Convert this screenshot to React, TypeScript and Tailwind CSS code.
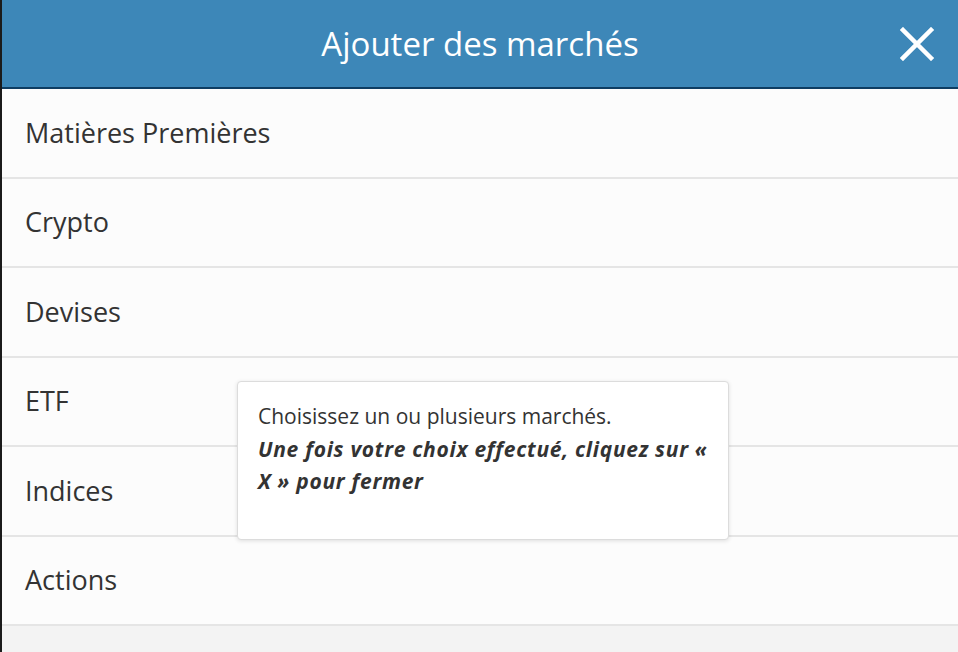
import React from 'react';

const markets = ['Matières Premières', 'Crypto', 'Devises', 'ETF', 'Indices', 'Actions'];

export default function App() {
  return (
    <div
      className="flex h-[652px] w-[958px] overflow-hidden bg-[#f3f3f3]"
      style={{ fontFamily: '"Open Sans", "Liberation Sans", sans-serif' }}
    >
      <div className="w-[2px] shrink-0 bg-[#1b1b1b]" />
      <div className="relative flex flex-1 flex-col">
        {/* Header */}
        <div className="relative flex h-[89px] shrink-0 items-center justify-center border-b-2 border-[#0e3d62] bg-[#3d87b8]">
          <h1 className="text-[33px] leading-none text-white">Ajouter des marchés</h1>
          <button className="absolute right-[23px] top-[26px] flex h-[36px] w-[36px] items-center justify-center">
            <svg width="34" height="34" viewBox="0 0 34 34">
              <path d="M3 3 L31 31 M31 3 L3 31" stroke="#ffffff" strokeWidth="4.5" strokeLinecap="square" />
            </svg>
          </button>
        </div>

        {/* Market list */}
        <ul className="flex flex-col">
          {markets.map((m) => (
            <li
              key={m}
              className="flex h-[89.5px] items-center border-b-2 border-[#e5e5e5] bg-[#fcfcfc] pl-[23px] text-[27px] text-[#333333]"
            >
              {m}
            </li>
          ))}
        </ul>

        {/* Tooltip */}
        <div className="absolute left-[235px] top-[381px] h-[159px] w-[492px] rounded-[4px] border border-[#dcdcdc] bg-white pl-[20px] pr-[16px] pt-[18px] shadow-[0_1px_4px_rgba(0,0,0,0.12)]">
          <p className="text-[21px] leading-[32.5px] text-[#333333]">Choisissez un ou plusieurs marchés.</p>
          <p className="text-[21px] font-bold italic leading-[32.5px] tracking-[0.7px] text-[#333333]">
            Une fois votre choix effectué, cliquez sur « X » pour fermer
          </p>
        </div>
      </div>
    </div>
  );
}
